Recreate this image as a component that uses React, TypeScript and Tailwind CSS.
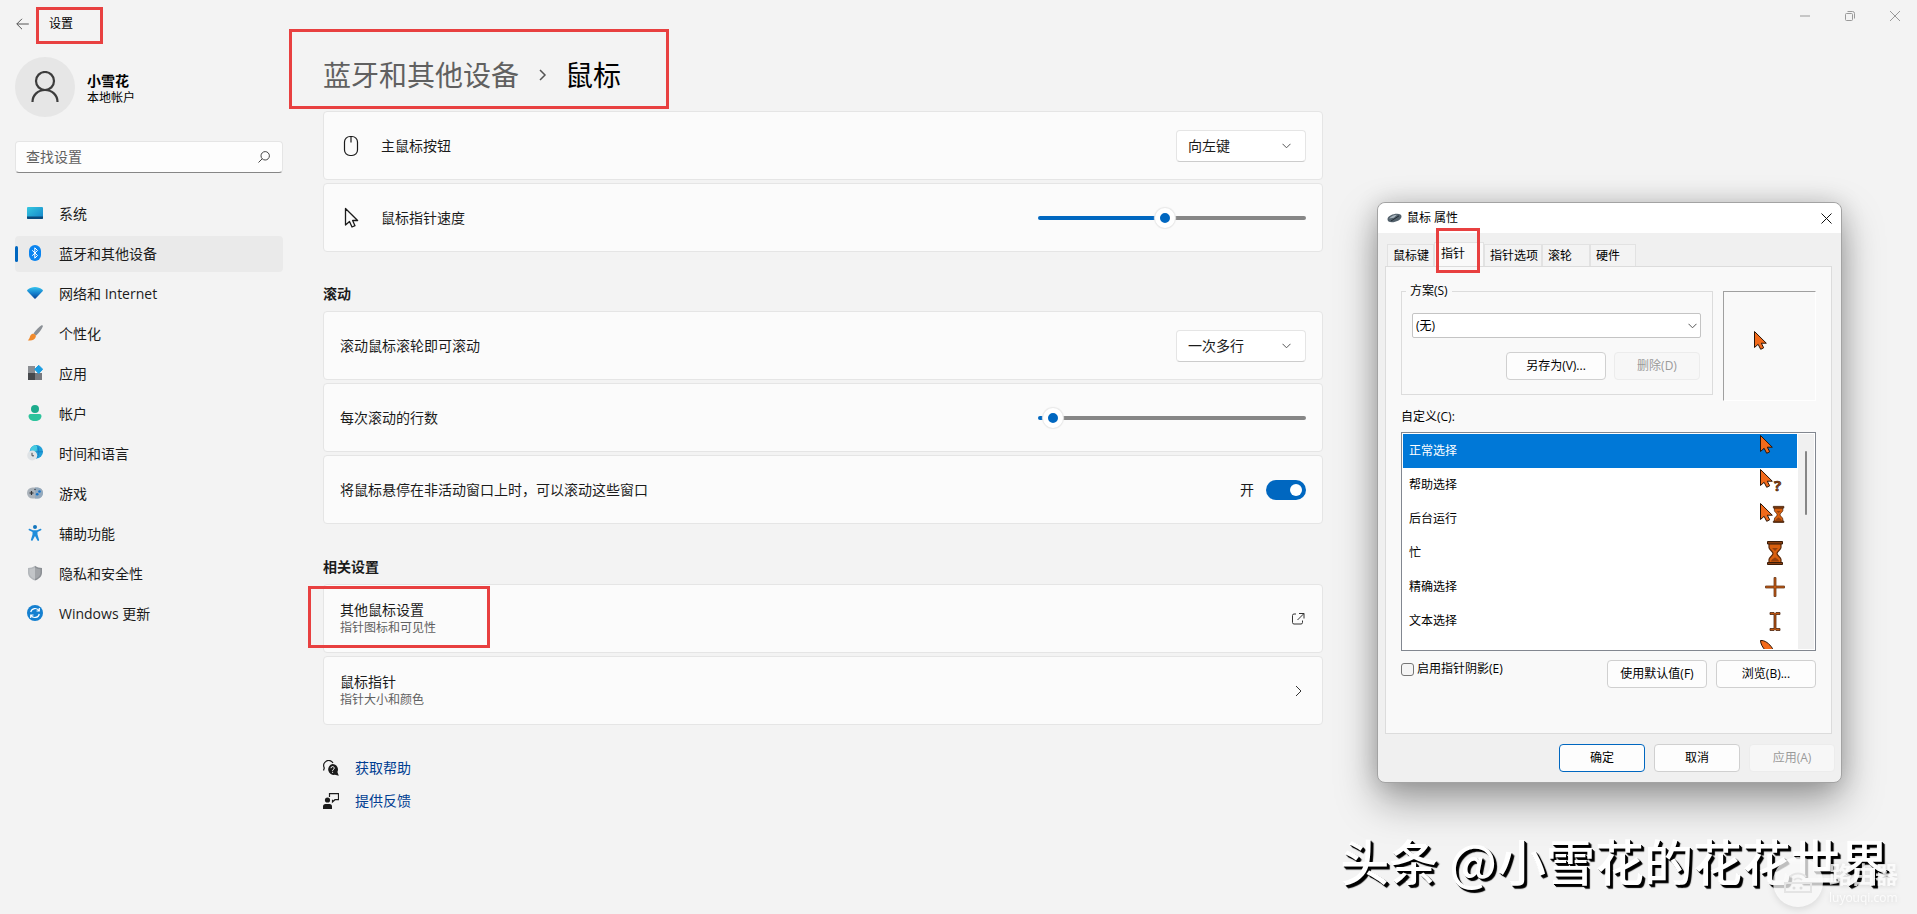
import { useState, type CSSProperties, type ReactNode } from 'react'
import clsx from 'clsx'

const nav = [
  { label: '系统', icon: <SystemIcon /> },
  { label: '蓝牙和其他设备', icon: <BluetoothIcon />, active: true },
  { label: '网络和 Internet', icon: <NetworkIcon /> },
  { label: '个性化', icon: <BrushIcon /> },
  { label: '应用', icon: <AppsIcon /> },
  { label: '帐户', icon: <AccountIcon /> },
  { label: '时间和语言', icon: <TimeIcon /> },
  { label: '游戏', icon: <GameIcon /> },
  { label: '辅助功能', icon: <AccessIcon /> },
  { label: '隐私和安全性', icon: <ShieldIcon /> },
  { label: 'Windows 更新', icon: <UpdateIcon /> },
]

const tabs = [
  { label: '鼠标键', width: 'w-[47px]' },
  { label: '指针', width: 'w-[50px]', active: true },
  { label: '指针选项', width: 'w-[58px]' },
  { label: '滚轮', width: 'w-[48px]' },
  { label: '硬件', width: 'w-[46px]' },
]

const ARROW = 'M.5 .5v16l3.6-3.2 2.6 5 3-1.500-2.4-4.6h5z'

const cursors = [
  { label: '正常选择', art: <path d={ARROW} /> },
  {
    label: '帮助选择',
    art: (
      <>
        <path d={ARROW} />
        <text x="14" y="22" fontSize="15" fontWeight="700" fill="#a0440c" stroke="#2b1405" strokeWidth=".6">?</text>
      </>
    ),
  },
  {
    label: '后台运行',
    art: (
      <>
        <path d={ARROW} />
        <Hourglass transform="translate(13 3) scale(.7)" />
      </>
    ),
  },
  { label: '忙', art: <Hourglass transform="translate(7 4)" /> },
  {
    label: '精确选择',
    art: <path d="M14 6.500h2v8.500h8.500v2h-8.500v8.500h-2v-8.500h-8.500v-2h8.500z" fill="#c2560f" stroke="#6b3a1a" strokeWidth=".8" />,
  },
  {
    label: '文本选择',
    art: <path d="M10 7.500h4l1 1 1-1h4v2h-4v14h4v2h-4l-1-1-1 1h-4v-2h4v-14h-4z" fill="#c2560f" stroke="#4a2510" strokeWidth=".8" />,
  },
  { label: '', art: <path d="M.5 1.500c4-.5 9 3 12 8l6 10h-6l-7-8c-3-3-5-7-5-10z" /> },
]

export default function App() {
  return (
    <div className="relative min-h-screen overflow-hidden bg-[#f3f3f3] font-['Open_Sans','Noto_Sans_CJK_SC',sans-serif] text-sm leading-5 text-[#1b1b1b]">
      <header className="flex h-12 items-center pl-4">
        <button aria-label="返回" className="mr-5 text-[#555]">
          <svg className="block" width="13" height="12" viewBox="0 0 13 12" fill="none" stroke="currentColor">
            <path d="M6 .8.8 6 6 11.200M.8 6h12" />
          </svg>
        </button>
        <span className="relative text-xs text-black">
          设置
          <Mark className="-top-[9px] -left-[13px] h-[37px] w-[67px]" />
        </span>
        <div className="ml-auto flex h-8 self-start text-[#999]">
          <WindowButton label="最小化"><path d="M0 5h10" /></WindowButton>
          <WindowButton label="还原"><path d="M.5 3.500a1 1 0 0 1 1-1h5a1 1 0 0 1 1 1v5a1 1 0 0 1-1 1h-5a1 1 0 0 1-1-1zM2.500.5h5a2 2 0 0 1 2 2v5" /></WindowButton>
          <WindowButton label="关闭"><path d="m0 0 10 10M10 0 0 10" /></WindowButton>
        </div>
      </header>

      <div className="flex">
        <Sidebar />
        <main className="ml-10 max-w-[1000px] flex-1 pt-[9px]">
          <h1 className="relative mb-[18px] flex w-fit items-center text-[28px] leading-9 text-black">
            <span className="text-[#606060]">蓝牙和其他设备</span>
            <svg className="mr-[18px] ml-5" width="8" height="12" viewBox="0 0 8 12" fill="none" stroke="#555" strokeWidth="1.500">
              <path d="m1 1 5 5-5 5" />
            </svg>
            鼠标
            <Mark className="-top-7 -left-[34px] h-[80px] w-[380px]" />
          </h1>

          <div className="flex flex-col gap-[3px]">
            <Card icon={<MouseIcon />} title="主鼠标按钮" htmlFor="primary">
              <Dropdown id="primary" value="向左键" />
            </Card>
            <Card icon={<PointerIcon />} title="鼠标指针速度" htmlFor="speed">
              <Slider id="speed" min={1} max={20} initial={10} />
            </Card>
          </div>

          <h2 className="mt-8 mb-[7px] font-semibold">滚动</h2>
          <div className="flex flex-col gap-[3px]">
            <Card title="滚动鼠标滚轮即可滚动" htmlFor="wheel">
              <Dropdown id="wheel" value="一次多行" />
            </Card>
            <Card title="每次滚动的行数" htmlFor="lines">
              <Slider id="lines" min={1} max={100} initial={3} />
            </Card>
            <Card title="将鼠标悬停在非活动窗口上时，可以滚动这些窗口" htmlFor="hover">
              <span className="mr-3">开</span>
              <input
                id="hover"
                type="checkbox"
                role="switch"
                defaultChecked
                className="h-5 w-10 appearance-none rounded-full bg-[#8a8a8a] p-1 before:block before:size-3 before:rounded-full before:bg-white checked:bg-[#0067c0] checked:before:ml-5"
              />
            </Card>
          </div>

          <h2 className="mt-[33px] mb-[7px] font-semibold">相关设置</h2>
          <div className="flex flex-col gap-[3px]">
            <LinkCard title="其他鼠标设置" detail="指针图标和可见性" marked>
              <path d="M5 2H3a1.500 1.500 0 0 0-1.500 1.500v7A1.500 1.500 0 0 0 3 12h7a1.500 1.500 0 0 0 1.500-1.500V8.500M8 1.500h5v5M12.800 1.700 6.500 8" />
            </LinkCard>
            <LinkCard title="鼠标指针" detail="指针大小和颜色">
              <path d="m5 2 5 5-5 5" />
            </LinkCard>
          </div>

          <div className="mt-[33px] flex flex-col items-start gap-[13px] text-[#003e92]">
            <a href="#help" className="flex items-center gap-4"><HelpIcon />获取帮助</a>
            <a href="#feedback" className="flex items-center gap-4"><FeedbackIcon />提供反馈</a>
          </div>
        </main>
      </div>

      <MouseDialog />
      <Watermark />
    </div>
  )
}

/* Red annotation frame */
function Mark({ className }: { className: string }) {
  return <span className={clsx('pointer-events-none absolute z-10 border-3 border-[#e84040]', className)} />
}

function WindowButton({ label, children }: { label: string; children: ReactNode }) {
  return (
    <button aria-label={label} className="grid w-[45px] place-items-center">
      <svg width="10" height="10" viewBox="0 0 10 10" fill="none" stroke="currentColor" className="overflow-visible">
        {children}
      </svg>
    </button>
  )
}

function Sidebar() {
  return (
    <aside className="ml-[15px] w-[268px] pt-[9px]">
      <div className="flex items-center">
        <div className="grid size-[60px] place-items-center rounded-full bg-[#e6e6e6]">
          <svg width="28" height="32" viewBox="0 0 28 32" fill="none" stroke="#3c3c3c" strokeWidth="2.200">
            <circle cx="14" cy="10" r="9" />
            <path d="M1.500 31c0-7 5.500-12 12.500-12s12.500 5 12.500 12" />
          </svg>
        </div>
        <div className="mt-1 ml-3 text-black">
          <div className="leading-[18px] font-semibold">小雪花</div>
          <div className="text-xs leading-4">本地帐户</div>
        </div>
      </div>

      <div className="mt-6 flex h-8 items-center rounded-sm border border-[#e5e5e5] border-b-[#868686] bg-[#fdfdfd] pr-3 pl-[10px]">
        <input aria-label="查找设置" placeholder="查找设置" className="min-w-0 flex-1 bg-transparent outline-none placeholder:text-[#606060]" />
        <svg width="12" height="12" viewBox="0 0 12 12" fill="none" stroke="#444">
          <circle cx="7.200" cy="4.800" r="4.200" />
          <path d="M4.200 7.800.5 11.500" />
        </svg>
      </div>

      <nav className="mt-[23px] flex flex-col gap-1">
        {nav.map((item) => (
          <a
            key={item.label}
            href="#settings"
            className={clsx('relative flex h-9 items-center gap-4 rounded pl-3', item.active && 'bg-[#eaeaea]')}
          >
            {item.active && <span className="absolute top-2.5 left-0 h-4 w-[3px] rounded-full bg-[#0067c0]" />}
            {item.icon}
            {item.label}
          </a>
        ))}
      </nav>
    </aside>
  )
}

const cardClass = 'flex h-[69px] items-center rounded border border-[#e5e5e5] bg-[#fbfbfb] px-4'

interface CardProps {
  icon?: ReactNode
  title: string
  htmlFor: string
  children: ReactNode
}

function Card({ icon, title, htmlFor, children }: CardProps) {
  return (
    <div className={cardClass}>
      {icon && <span className="mr-[19px] grid w-[22px] place-items-center">{icon}</span>}
      <label htmlFor={htmlFor} className="mr-auto">{title}</label>
      {children}
    </div>
  )
}

function LinkCard({ title, detail, marked, children }: { title: string; detail: string; marked?: boolean; children: ReactNode }) {
  return (
    <a href="#related" className={clsx(cardClass, 'relative')}>
      <span className="mr-auto">
        <span className="block leading-[18px]">{title}</span>
        <span className="block text-xs leading-[18px] text-[#606060]">{detail}</span>
      </span>
      <svg className="mr-px" width="14" height="14" viewBox="0 0 14 14" fill="none" stroke="#333">{children}</svg>
      {marked && <Mark className="top-px -left-4 h-[62px] w-[182px]" />}
    </a>
  )
}

function Chevron({ className }: { className: string }) {
  return (
    <svg className={clsx('pointer-events-none absolute', className)} width="9" height="6" viewBox="0 0 9 6" fill="none" stroke="#555">
      <path d="m.5.8 4 4 4-4" />
    </svg>
  )
}

function Dropdown({ id, value }: { id: string; value: string }) {
  return (
    <span className="relative">
      <select id={id} className="block h-8 w-[130px] appearance-none rounded border border-[#e5e5e5] border-b-[#cccccc] bg-white pl-[11px]">
        <option>{value}</option>
      </select>
      <Chevron className="top-[13px] right-[15px]" />
    </span>
  )
}

function Slider({ id, min, max, initial }: { id: string; min: number; max: number; initial: number }) {
  const [value, setValue] = useState(initial)
  const fill = ((value - min) / (max - min)) * 100
  return (
    <input
      id={id}
      type="range"
      min={min}
      max={max}
      value={value}
      onChange={(e) => setValue(Number(e.target.value))}
      style={{ '--fill': `calc(10px + ${fill}% * 0.925)` } as CSSProperties}
      className="h-5 w-[268px] appearance-none bg-transparent [&::-webkit-slider-runnable-track]:h-1 [&::-webkit-slider-runnable-track]:rounded-full [&::-webkit-slider-runnable-track]:bg-[linear-gradient(to_right,#0067c0_var(--fill),#868686_var(--fill))] [&::-webkit-slider-thumb]:-mt-2 [&::-webkit-slider-thumb]:size-5 [&::-webkit-slider-thumb]:appearance-none [&::-webkit-slider-thumb]:rounded-full [&::-webkit-slider-thumb]:border-5 [&::-webkit-slider-thumb]:border-white [&::-webkit-slider-thumb]:bg-[#0067c0] [&::-webkit-slider-thumb]:shadow-[0_0_1px_1px_#e8e8e8]"
    />
  )
}

const buttonClass = 'h-7 rounded border border-[#d0d0d0] bg-[#fdfdfd]'
const disabledClass = 'h-7 rounded border border-[#ececec] bg-[#f7f7f7] text-[#9a9a9a]'

function MouseDialog() {
  return (
    <section
      role="dialog"
      aria-label="鼠标 属性"
      className="absolute top-[202px] left-[1377px] w-[465px] rounded-lg border border-[#a3a3a3] bg-[#f0f0f0] text-xs text-black shadow-[0_18px_40px_rgba(0,0,0,0.36),0_0_24px_rgba(0,0,0,0.14)]"
    >
      <div className="flex h-[30px] items-center rounded-t-lg bg-white pr-[9px] pl-[9px]">
        <svg width="15" height="10" viewBox="0 0 15 10">
          <path d="M.5 6C1 3 6 .8 10 .8c3 0 4.800 1.200 4.500 3C14 7 9 9.300 5 9.300 2 9.300.2 8 .5 6z" fill="#53616c" />
          <path d="M2 5.500c2-2.500 5-3.800 8-3.800l-3 3z" fill="#a8b4bd" />
          <path d="M4 8 12 2.800" stroke="#222c34" />
        </svg>
        <span className="ml-[5px]">鼠标 属性</span>
        <button aria-label="关闭" className="ml-auto">
          <svg className="block" width="11" height="11" viewBox="0 0 11 11" stroke="#111">
            <path d="m.5.5 10 10M10.500.5l-10 10" />
          </svg>
        </button>
      </div>

      <div className="pt-[9px] pr-[9px] pl-[7px]">
        <div role="tablist" className="relative flex h-6 items-end pl-0.5">
          {tabs.map((tab) => (
            <button
              key={tab.label}
              role="tab"
              aria-selected={!!tab.active}
              className={clsx(
                'border border-b-0 border-[#e2e2e2] text-left whitespace-nowrap',
                tab.width,
                tab.active ? 'h-full bg-[#f9f9f9] pb-0.5 pl-1.5' : 'h-[22px] bg-[#f3f3f3] pl-[5px]',
              )}
            >
              {tab.label}
            </button>
          ))}
          <Mark className="-top-[14px] left-[51px] h-[45px] w-[44px]" />
        </div>

        <div className="border border-[#dcdcdc] bg-[#f9f9f9] px-[15px] pt-4 pb-[45px]">
          <div className="flex gap-[10px]">
            <fieldset className="h-[112px] flex-1 border border-[#dcdcdc] pt-[14px] pr-[11px] pl-[10px]">
              <legend className="-ml-1.5 px-1 leading-4">方案(S)</legend>
              <div className="relative">
                <select aria-label="方案(S)" className="block h-[25px] w-full appearance-none rounded-xs border border-[#c4c4c4] bg-white pl-[3px]">
                  <option>(无)</option>
                </select>
                <Chevron className="top-[10px] right-1" />
              </div>
              <div className="mt-[14px] flex justify-end gap-2 pr-px">
                <button className={clsx(buttonClass, 'w-[100px]')}>另存为(V)...</button>
                <button disabled className={clsx(disabledClass, 'w-[86px]')}>删除(D)</button>
              </div>
            </fieldset>
            <div className="mt-2 h-[110px] w-[93px] border border-t-[#a0a0a0] border-r-white border-b-white border-l-[#a0a0a0] pt-[39px] pl-[30px]">
              <CursorArt><path d={ARROW} /></CursorArt>
            </div>
          </div>

          <div className="mt-2 leading-4">自定义(C):</div>
          <div className="mt-[7px] flex h-[219px] border border-[#828790] bg-white p-px">
            <ul role="listbox" aria-label="自定义(C)" className="flex-1 overflow-hidden">
              {cursors.map((cursor, i) => (
                <li
                  key={cursor.label}
                  role="option"
                  aria-selected={i === 0}
                  className={clsx('flex h-[34px] items-center justify-between pr-[5px] pl-1.5', i === 0 && 'bg-[#0078d7] text-white')}
                >
                  {cursor.label}
                  <span className="ml-auto"><CursorArt>{cursor.art}</CursorArt></span>
                </li>
              ))}
            </ul>
            <div className="ml-px w-4 bg-[#f0f0f0] pt-[17px]">
              <div className="mx-auto h-16 w-0.5 rounded-full bg-[#868686]" />
            </div>
          </div>

          <div className="mt-[9px] flex items-start gap-[9px]">
            <label className="mt-px mr-auto flex items-center gap-[3px]">
              <input type="checkbox" className="size-[13px] appearance-none rounded-[3px] border border-[#767676] bg-[#f5f5f5]" />
              启用指针阴影(E)
            </label>
            <button className={clsx(buttonClass, 'w-[100px]')}>使用默认值(F)</button>
            <button className={clsx(buttonClass, 'w-[100px]')}>浏览(B)...</button>
          </div>
        </div>
      </div>

      <div className="flex justify-end gap-[9px] pt-[10px] pr-1.5 pb-[10px]">
        <button className="h-7 w-[86px] rounded border border-[#0067c0] bg-[#fdfdfd]">确定</button>
        <button className={clsx(buttonClass, 'w-[86px]')}>取消</button>
        <button disabled className={clsx(disabledClass, 'w-[86px]')}>应用(A)</button>
      </div>
    </section>
  )
}

function Watermark() {
  return (
    <>
      <div className="pointer-events-none absolute right-[28px] bottom-6 font-['Noto_Sans_CJK_SC',sans-serif] text-[49px] leading-[60px] font-medium whitespace-nowrap text-white [text-shadow:1px_1px_0_#000,2px_2px_0_#000,3px_3px_1px_#000]">
        头条 @小雪花的花花世界
      </div>
      <div className="pointer-events-none absolute right-[19px] bottom-2 flex h-12 items-center gap-1.5 text-white/80">
        <svg className="overflow-visible drop-shadow-md" width="50" height="50" viewBox="0 0 50 50">
          <circle cx="25" cy="25" r="25" fill="#fff" fillOpacity=".75" />
          <path d="M12 26h26v9H12zM17 20a11 11 0 0 1 16 0M21 23a6 6 0 0 1 8 0" fill="none" stroke="#e4e4e4" strokeWidth="2" />
          <circle cx="21" cy="31" r="1.500" fill="#ddd" />
          <circle cx="28" cy="31" r="1.500" fill="#ddd" />
        </svg>
        <div className="drop-shadow-sm">
          <div className="text-[23px] leading-8 font-semibold">路由器</div>
          <div className="text-xs leading-4">luyouqi.com</div>
        </div>
      </div>
    </>
  )
}

/* Pointer scheme artwork */
function CursorArt({ children }: { children: ReactNode }) {
  return (
    <svg className="block" width="32" height="32" viewBox="0 0 32 32" fill="#f26a1b" stroke="#2b1405">
      {children}
    </svg>
  )
}

function Hourglass({ transform }: { transform: string }) {
  return (
    <g transform={transform}>
      <path d="M2 2.500h12v4c0 2-4 4-4 6s4 4 4 6v4H2v-4c0-2 4-4 4-6s-4-4-4-6z" fill="#d9600f" stroke="#5a2a0c" strokeWidth="1.200" />
      <path d="M5 7h6l-3 3zM4 20.500c0-2 4-4 4-4s4 2 4 4z" fill="#96400c" stroke="none" />
      <path d="M.5.500h15v2.500H.5zM.5 21.500h15v2H.5z" fill="#8a3f10" stroke="#3a1c08" />
    </g>
  )
}

/* Card and link icons */
function MouseIcon() {
  return (
    <svg width="16" height="22" viewBox="0 0 16 22" fill="none" stroke="#1b1b1b" strokeWidth="1.200">
      <rect x="1.500" y="1.500" width="13" height="19" rx="5.500" />
      <path d="M8 1.500v6" />
    </svg>
  )
}

function PointerIcon() {
  return (
    <svg width="16" height="22" viewBox="0 0 16 22" fill="none" stroke="#1b1b1b" strokeWidth="1.300" strokeLinejoin="round">
      <path d="M2.500 1.500v16.500l4-3.500 2.500 5.500 3-1.300-2.400-5.200h5z" />
    </svg>
  )
}

function HelpIcon() {
  return (
    <svg width="16" height="16" viewBox="0 0 16 16">
      <path d="M.5 10.500 1.300 8A5 5 0 0 1 10 3" fill="none" stroke="#1b1b1b" strokeWidth="1.200" />
      <path d="M9.500 4a5.500 5.500 0 0 1 4.900 8l1.400 3.800-3.900-1A5.500 5.500 0 1 1 9.500 4z" fill="#1b1b1b" />
      <path d="M8 8.200a1.600 1.600 0 1 1 2.300 1.400c-.6.300-.7.500-.7 1.200M9.600 11.800v1" fill="none" stroke="#fff" />
    </svg>
  )
}

function FeedbackIcon() {
  return (
    <svg width="16" height="16" viewBox="0 0 16 16" fill="#1b1b1b">
      <circle cx="4.500" cy="7" r="2.600" />
      <path d="M0 16v-2.500A2.500 2.500 0 0 1 2.500 11h4A2.500 2.500 0 0 1 9 13.500V16z" />
      <path d="M6.500 4V.7h9v6H12L9.500 9V6.700" fill="none" stroke="#1b1b1b" strokeWidth="1.200" />
    </svg>
  )
}

/* Sidebar icons */
function Glyph({ children }: { children: ReactNode }) {
  return <svg className="mb-0.5 shrink-0" width="16" height="16" viewBox="0 0 16 16">{children}</svg>
}

function SystemIcon() {
  return (
    <Glyph>
      <linearGradient id="sys" x2="1" y2="1"><stop stopColor="#35c8e0" /><stop offset="1" stopColor="#1382c8" /></linearGradient>
      <rect y="2" width="16" height="12" rx="1" fill="url(#sys)" />
      <path d="M0 11.500h16V13a1 1 0 0 1-1 1H1a1 1 0 0 1-1-1z" fill="#0a4a7c" />
    </Glyph>
  )
}

function BluetoothIcon() {
  return (
    <Glyph>
      <rect x="2" width="12" height="16" rx="6" fill="#0a84f0" />
      <path d="m5.200 5.300 5.300 5.200-2.700 2.700V2.800l2.700 2.700-5.300 5.200" fill="none" stroke="#fff" />
    </Glyph>
  )
}

function NetworkIcon() {
  return (
    <Glyph>
      <linearGradient id="net" x2="0" y2="1"><stop stopColor="#35c3ee" /><stop offset=".5" stopColor="#1683cf" /><stop offset="1" stopColor="#0a4496" /></linearGradient>
      <path d="M.4 6.200c-.5-.5-.4-1.100.1-1.500 4.400-3.500 10.600-3.500 15 0 .5.400.6 1 .1 1.500L8.600 13.500a.8.800 0 0 1-1.200 0z" fill="url(#net)" />
    </Glyph>
  )
}

function BrushIcon() {
  return (
    <Glyph>
      <path d="M14.500.3c.9-.5 1.700.2 1.300 1.100-1.200 3-4.300 7-7 9.300L6.500 8.500C8.800 5.500 12 1.800 14.500.3z" fill="#8b9096" />
      <path d="M5.800 8.800c1.800-.3 3.400 1.200 3 3-.5 2.900-4.600 4.600-8.100 3.400 1.700-.8 1.700-2 2.300-3.600.5-1.500 1.500-2.600 2.800-2.800z" fill="#f08a2c" />
    </Glyph>
  )
}

function AppsIcon() {
  return (
    <Glyph>
      <path d="M1 1h7v7H1z" fill="#8a8d92" />
      <path d="M1 8h7v7H1z" fill="#46484c" />
      <path d="M8 8h7v7H8z" fill="#77797f" />
      <path d="m11.700.3 4 4-4 4.200-4-4.200z" fill="#1b9de2" stroke="#1b9de2" strokeLinejoin="round" />
    </Glyph>
  )
}

function AccountIcon() {
  return (
    <Glyph>
      <circle cx="8" cy="4" r="4" fill="#1cab8c" />
      <path d="M3.500 9h9a2 2 0 0 1 2 2c0 3-2.800 5-6.500 5s-6.500-2-6.500-5a2 2 0 0 1 2-2z" fill="#2cc39c" />
    </Glyph>
  )
}

function TimeIcon() {
  return (
    <Glyph>
      <circle cx="9.300" cy="6.800" r="6.700" fill="#1f9fd8" />
      <path d="M3 5a6.700 6.700 0 0 1 8-4.700c-1 3-1.500 5-1.500 7z" fill="#45cbe0" />
      <path d="M9.500.1c3 3 3 10 0 13.300M3 6.800h13" stroke="#1576bd" strokeWidth=".7" fill="none" />
      <circle cx="5.200" cy="10.500" r="5" fill="#dfe3e6" />
      <path d="M5 7.800v3h2" stroke="#4b4f55" fill="none" />
    </Glyph>
  )
}

function GameIcon() {
  return (
    <Glyph>
      <rect y="2.500" width="16" height="11" rx="5.500" fill="#aab2ba" />
      <path d="M8 2.500h2.500a5.500 5.500 0 0 1 0 11H8z" fill="#93a9bd" />
      <path d="M2.500 8h4M4.500 6v4" stroke="#2e3338" strokeWidth="1.200" />
      <circle cx="12.500" cy="6.500" r="1.300" fill="#1773c8" />
      <circle cx="10.200" cy="9.300" r="1.300" fill="#1773c8" />
      <circle cx="8" cy="4.500" r=".7" fill="#2e3338" />
    </Glyph>
  )
}

function AccessIcon() {
  return (
    <Glyph>
      <circle cx="8" cy="2" r="2" fill="#1576bd" />
      <path d="M2.600 3.800c-.8-.4-1.500.9-.7 1.400L5.500 7v2.500L3.900 14.700c-.3 1.100 1.300 1.700 1.800.6L8 11l2.300 4.300c.5 1.100 2.100.5 1.800-.6L10.500 9.500V7l3.600-1.800c.8-.5.1-1.800-.7-1.400L10 5.200H6z" fill="#1f8ddb" />
    </Glyph>
  )
}

function ShieldIcon() {
  return (
    <Glyph>
      <path d="M8 .8c2 1.500 4.500 2.200 7 2.300v4.500c0 4-3 6.500-7 8z" fill="#8b8f94" />
      <path d="M8 .8C6 2.300 3.500 3 1 3.100v4.500c0 4 3 6.500 7 8z" fill="#b3b7bb" />
      <path d="M8 2.600c1.600 1 3.500 1.600 5.500 1.700v3.400c0 3-2.200 5-5.500 6.300-3.300-1.300-5.500-3.300-5.500-6.300V4.300c2-.1 3.900-.7 5.500-1.700z" fill="#fff" fillOpacity=".2" />
    </Glyph>
  )
}

function UpdateIcon() {
  return (
    <Glyph>
      <circle cx="8" cy="8" r="8" fill="#1580d0" />
      <path d="M3.700 7A4.500 4.500 0 0 1 12 5.800M12.300 9A4.500 4.500 0 0 1 4 10.200M12.300 3v3H9.500M3.700 13v-3h2.800" fill="none" stroke="#fff" strokeWidth="1.200" />
    </Glyph>
  )
}
